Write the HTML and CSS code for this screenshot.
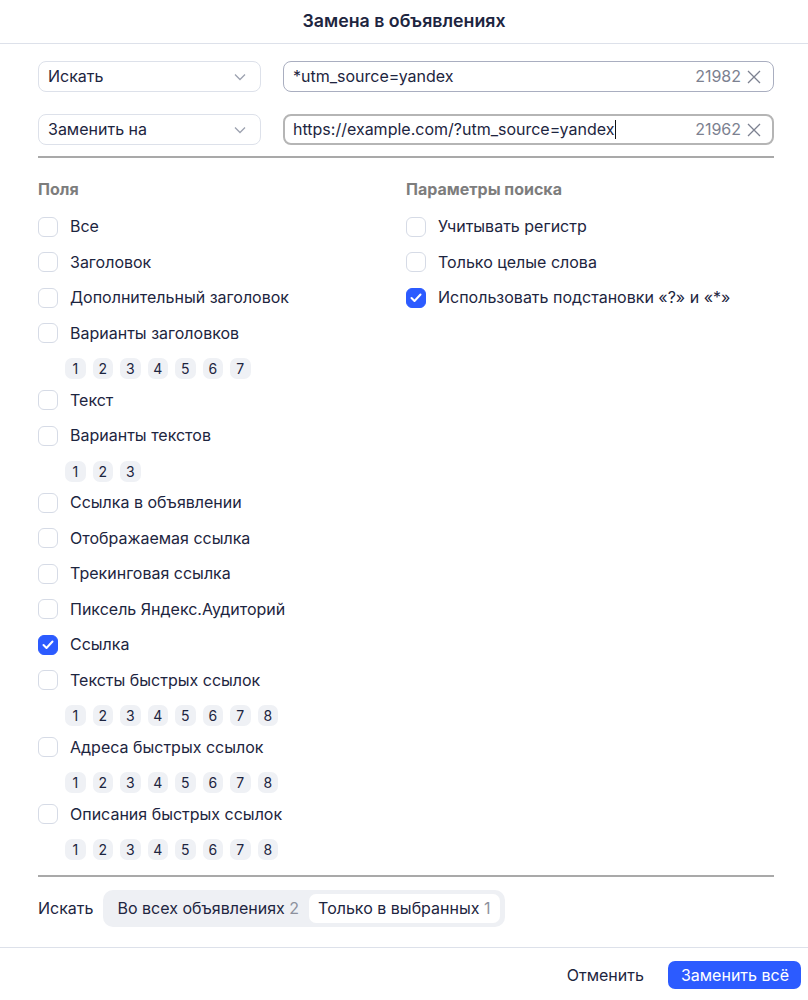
FILE: index.html
```html
<!DOCTYPE html>
<html lang="ru">
  <head>
    <meta charset="UTF-8">
    <meta name="viewport" content="width=device-width, initial-scale=1">
    <title>Замена в объявлениях</title>
    <link rel="stylesheet" href="styles.css">
  </head>
  <body>

    <div class="dialog">
      <header class="dialog-head">
        <h1>Замена в объявлениях</h1>
      </header>

      <section class="dialog-body">
        <div class="query-rows">
          <div class="query-row">
            <div class="select">
              <span>Искать</span>
              <svg class="chevron" viewBox="0 0 12 8" width="12" height="8"><path d="M1 1.5l5 5 5-5" /></svg>
            </div>
            <div class="field">
              <span class="field-value">*utm_source=yandex</span>
              <span class="field-count">21982</span>
              <svg class="clear" viewBox="0 0 14 14" width="14" height="14"><path d="M1 1l12 12M13 1L1 13" /></svg>
            </div>
          </div>
          <div class="query-row">
            <div class="select">
              <span>Заменить на</span>
              <svg class="chevron" viewBox="0 0 12 8" width="12" height="8"><path d="M1 1.5l5 5 5-5" /></svg>
            </div>
            <div class="field is-focused">
              <span class="field-value">https://example.com/?utm_source=yandex<i class="caret"></i></span>
              <span class="field-count">21962</span>
              <svg class="clear" viewBox="0 0 14 14" width="14" height="14"><path d="M1 1l12 12M13 1L1 13" /></svg>
            </div>
          </div>
        </div>

        <hr class="rule">

        <div class="columns">
          <div class="column">
            <h2>Поля</h2>
            <label class="option"><span class="box"></span>Все</label>
            <label class="option"><span class="box"></span>Заголовок</label>
            <label class="option"><span class="box"></span>Дополнительный заголовок</label>
            <label class="option"><span class="box"></span>Варианты заголовков</label>
            <div class="chips"><span>1</span><span>2</span><span>3</span><span>4</span><span>5</span><span>6</span><span>7</span></div>
            <label class="option"><span class="box"></span>Текст</label>
            <label class="option"><span class="box"></span>Варианты текстов</label>
            <div class="chips"><span>1</span><span>2</span><span>3</span></div>
            <label class="option"><span class="box"></span>Ссылка в объявлении</label>
            <label class="option"><span class="box"></span>Отображаемая ссылка</label>
            <label class="option"><span class="box"></span>Трекинговая ссылка</label>
            <label class="option"><span class="box"></span>Пиксель Яндекс.Аудиторий</label>
            <label class="option"><span class="box is-checked"><svg viewBox="0 0 12 10" width="12" height="10"><path d="M1.5 5l3 3 6-6.5" /></svg></span>Ссылка</label>
            <label class="option"><span class="box"></span>Тексты быстрых ссылок</label>
            <div class="chips"><span>1</span><span>2</span><span>3</span><span>4</span><span>5</span><span>6</span><span>7</span><span>8</span></div>
            <label class="option"><span class="box"></span>Адреса быстрых ссылок</label>
            <div class="chips"><span>1</span><span>2</span><span>3</span><span>4</span><span>5</span><span>6</span><span>7</span><span>8</span></div>
            <label class="option"><span class="box"></span>Описания быстрых ссылок</label>
            <div class="chips"><span>1</span><span>2</span><span>3</span><span>4</span><span>5</span><span>6</span><span>7</span><span>8</span></div>
          </div>

          <div class="column">
            <h2>Параметры поиска</h2>
            <label class="option"><span class="box"></span>Учитывать регистр</label>
            <label class="option"><span class="box"></span>Только целые слова</label>
            <label class="option"><span class="box is-checked"><svg viewBox="0 0 12 10" width="12" height="10"><path d="M1.5 5l3 3 6-6.5" /></svg></span>Использовать подстановки «?» и «*»</label>
          </div>
        </div>

        <hr class="rule">

        <div class="scope">
          <span>Искать</span>
          <div class="segmented">
            <span class="segment">Во всех объявлениях <em>2</em></span>
            <span class="segment is-active">Только в выбранных <em>1</em></span>
          </div>
        </div>
      </section>

      <footer class="dialog-foot">
        <button class="btn btn-plain">Отменить</button>
        <button class="btn btn-primary">Заменить всё</button>
      </footer>
    </div>

  </body>
</html>
```

FILE: styles.css
```css
:root {
  --clr-text:    #1d2540;
  --clr-muted:   #7c8190;
  --clr-heading: #7d7d7d;
  --clr-line:    #dde1ea;
  --clr-rule:    #a9a9a9;
  --clr-chip:    #eff1f5;
  --clr-accent:  #2c5bff;
}

html, body {
  margin: 0;
  padding: 0;
  background: #fff;
  font: normal normal 16px/1.3 "Inter", "Liberation Sans", sans-serif;
  color: var(--clr-text);
}

*, *::before, *::after {
  box-sizing: border-box;
}

.dialog {
  width: 808px;
  height: 1000px;
  display: flex;
  flex-direction: column;
}

/* Header */

.dialog-head {
  height: 44px;
  border-bottom: 1px solid var(--clr-line);
  display: flex;
  align-items: center;
  justify-content: center;
}

.dialog-head h1 {
  margin: 0 0 2px;
  font-size: 17.75px;
  font-weight: 600;
}

/* Body */

.dialog-body {
  padding: 17px 34px 0 38px;
}

.query-rows {
  display: flex;
  flex-direction: column;
  gap: 22px;
}

.query-row {
  display: grid;
  grid-template-columns: 223px 1fr;
  gap: 22px;
  height: 31px;
}

.select {
  display: flex;
  align-items: center;
  justify-content: space-between;
  padding: 0 14px 0 9px;
  border: 1px solid var(--clr-line);
  border-radius: 8px;
}

.chevron {
  fill: none;
  stroke: #9da2b0;
  stroke-width: 1.3;
}

.field {
  display: flex;
  align-items: center;
  gap: 6px;
  padding: 0 12px 0 9px;
  border: 1px solid #a9aec0;
  border-radius: 8px;
}

.field.is-focused {
  border: 2px solid #b5b5b5;
  padding-left: 8px;
  padding-right: 11px;
}

.field-value {
  flex: 1;
  white-space: nowrap;
}

.caret {
  display: inline-block;
  width: 1px;
  height: 19px;
  margin-left: 1px;
  vertical-align: -4px;
  background: #111;
}

.field-count {
  color: var(--clr-muted);
}

.clear {
  fill: none;
  stroke: var(--clr-muted);
  stroke-width: 1.3;
}

.rule {
  margin: 11px 0 0;
  border: 0;
  height: 2px;
  background: var(--clr-rule);
}

/* Fields and search options */

.columns {
  display: grid;
  grid-template-columns: 368px 1fr;
  padding-top: 21px;
}

.column {
  display: flex;
  flex-direction: column;
  align-items: flex-start;
}

.column h2 {
  margin: 0 0 10px;
  height: 20px;
  line-height: 20px;
  font-size: 16px;
  font-weight: 700;
  color: var(--clr-heading);
}

.option {
  display: flex;
  align-items: center;
  gap: 12px;
  height: 35.5px;
}

.box {
  width: 20px;
  height: 20px;
  border: 1px solid #d6dbe6;
  border-radius: 6px;
  display: flex;
  align-items: center;
  justify-content: center;
}

.box.is-checked {
  border-color: var(--clr-accent);
  background: var(--clr-accent);
}

.box svg {
  fill: none;
  stroke: #fff;
  stroke-width: 2;
  stroke-linecap: round;
  stroke-linejoin: round;
}

.chips {
  display: flex;
  gap: 7px;
  padding: 7px 0 3.5px 27px;
}

.chips span {
  width: 20.5px;
  height: 21px;
  border-radius: 7px;
  background: var(--clr-chip);
  font-size: 14px;
  line-height: 21px;
  text-align: center;
}

/* Scope switch */

.scope {
  display: flex;
  align-items: center;
  gap: 9px;
  margin-top: 13px;
}

.segmented {
  display: flex;
  padding: 4px 5px 4px 4px;
  border-radius: 10px;
  background: #eef0f4;
}

.segment {
  padding: 0 10px 0 11px;
  height: 29px;
  line-height: 29px;
  border-radius: 7px;
}

.segment.is-active {
  background: #fff;
  padding: 0 9px 0 9px;
}

.segment em {
  font-style: normal;
  color: #8d919d;
}

/* Footer */

.dialog-foot {
  margin-top: auto;
  border-top: 1px solid var(--clr-line);
  padding: 13px 7px 11px 0;
  display: flex;
  justify-content: flex-end;
  align-items: center;
  gap: 24px;
}

.btn {
  font: inherit;
  border: 0;
  background: none;
  color: var(--clr-text);
  padding: 0;
  cursor: pointer;
}

.btn-primary {
  height: 28px;
  padding: 0 12px 0 13px;
  border-radius: 7px;
  background: var(--clr-accent);
  color: #fff;
}
```
